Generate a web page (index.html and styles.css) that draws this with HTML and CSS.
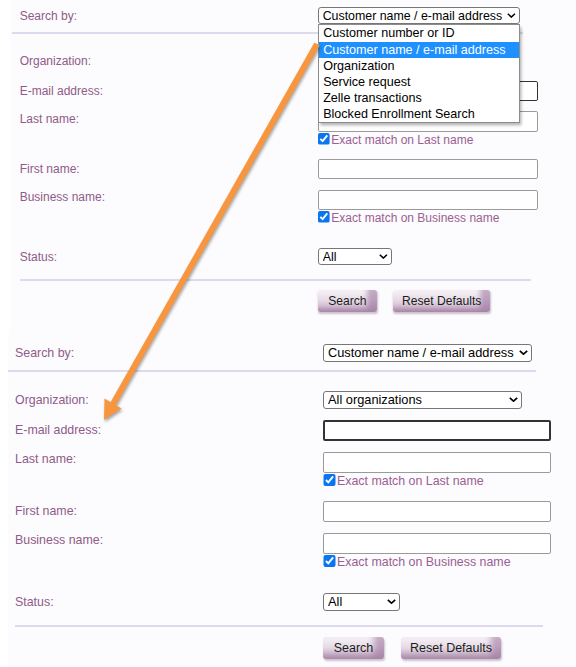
FILE: index.html
```html
<!DOCTYPE html>
<html lang="en">

<head>
  <meta charset="UTF-8" />
  <meta name="viewport" content="width=device-width, initial-scale=1.0" />
  <title>Customer search</title>
  <link rel="stylesheet" href="styles.css">
</head>

<body>
  <div class="page">

    <!-- first capture: the "Search by" list is open -->
    <form class="panel panel-top">
      <div class="row row-search">
        <label class="label">Search by:</label>
        <div class="select-wrap w-search">
          <select class="select">
            <option>Customer name / e-mail address</option>
          </select>
          <svg class="chevron" viewBox="0 0 9 5"><polyline points="0.8,0.8 4.5,4.2 8.2,0.8" /></svg>
          <ul class="options">
            <li class="option">Customer number or ID</li>
            <li class="option option-active">Customer name / e-mail address</li>
            <li class="option">Organization</li>
            <li class="option">Service request</li>
            <li class="option">Zelle transactions</li>
            <li class="option">Blocked Enrollment Search</li>
          </ul>
        </div>
      </div>

      <div class="rule rule-head"></div>

      <div class="row row-org">
        <label class="label">Organization:</label>
        <div class="select-wrap w-org">
          <select class="select">
            <option>All organizations</option>
          </select>
          <svg class="chevron" viewBox="0 0 9 5"><polyline points="0.8,0.8 4.5,4.2 8.2,0.8" /></svg>
        </div>
      </div>

      <div class="row">
        <label class="label">E-mail address:</label>
        <input class="input input-active" type="text">
      </div>

      <div class="row row-field">
        <label class="label">Last name:</label>
        <div class="field">
          <input class="input" type="text">
          <label class="check"><input type="checkbox" checked>Exact match on Last name</label>
        </div>
      </div>

      <div class="row row-first">
        <label class="label">First name:</label>
        <input class="input" type="text">
      </div>

      <div class="row row-field">
        <label class="label">Business name:</label>
        <div class="field">
          <input class="input" type="text">
          <label class="check"><input type="checkbox" checked>Exact match on Business name</label>
        </div>
      </div>

      <div class="row row-status">
        <label class="label">Status:</label>
        <div class="select-wrap w-status">
          <select class="select">
            <option>All</option>
          </select>
          <svg class="chevron" viewBox="0 0 9 5"><polyline points="0.8,0.8 4.5,4.2 8.2,0.8" /></svg>
        </div>
      </div>

      <div class="rule rule-end"></div>

      <div class="actions">
        <button type="button" class="btn btn-search">Search</button>
        <button type="button" class="btn btn-reset">Reset Defaults</button>
      </div>
    </form>

    <!-- second capture: after picking "Customer name / e-mail address" -->
    <form class="panel panel-bottom">
      <div class="row row-search">
        <label class="label">Search by:</label>
        <div class="select-wrap w-search">
          <select class="select">
            <option>Customer name / e-mail address</option>
          </select>
          <svg class="chevron" viewBox="0 0 9 5"><polyline points="0.8,0.8 4.5,4.2 8.2,0.8" /></svg>
        </div>
      </div>

      <div class="rule rule-head"></div>

      <div class="row row-org">
        <label class="label">Organization:</label>
        <div class="select-wrap w-org">
          <select class="select">
            <option>All organizations</option>
          </select>
          <svg class="chevron" viewBox="0 0 9 5"><polyline points="0.8,0.8 4.5,4.2 8.2,0.8" /></svg>
        </div>
      </div>

      <div class="row">
        <label class="label">E-mail address:</label>
        <input class="input input-active" type="text">
      </div>

      <div class="row row-field">
        <label class="label">Last name:</label>
        <div class="field">
          <input class="input" type="text">
          <label class="check"><input type="checkbox" checked>Exact match on Last name</label>
        </div>
      </div>

      <div class="row row-first">
        <label class="label">First name:</label>
        <input class="input" type="text">
      </div>

      <div class="row row-field">
        <label class="label">Business name:</label>
        <div class="field">
          <input class="input" type="text">
          <label class="check"><input type="checkbox" checked>Exact match on Business name</label>
        </div>
      </div>

      <div class="row row-status">
        <label class="label">Status:</label>
        <div class="select-wrap w-status">
          <select class="select">
            <option>All</option>
          </select>
          <svg class="chevron" viewBox="0 0 9 5"><polyline points="0.8,0.8 4.5,4.2 8.2,0.8" /></svg>
        </div>
      </div>

      <div class="rule rule-end"></div>

      <div class="actions">
        <button type="button" class="btn btn-search">Search</button>
        <button type="button" class="btn btn-reset">Reset Defaults</button>
      </div>
    </form>

    <!-- annotation arrow drawn over both captures -->
    <svg class="arrow" viewBox="0 0 576 667">
      <line x1="317" y1="44" x2="113" y2="404" />
      <polygon points="104,420 104.5,398.5 121.5,408.5" />
    </svg>

  </div>
</body>

</html>
```

FILE: styles.css
```css
/* base */
body {
  margin: 0;
  background-color: #ffffff;
  font-family: "Liberation Sans", Arial, Helvetica, sans-serif;
}

.page {
  position: relative;
  width: 576px;
  height: 667px;
  overflow: hidden;
}

/* the two captured forms */
.panel {
  box-sizing: border-box;
  background-color: #fcfbfe;
  padding-top: 9px;
}

.panel-top {
  /* the first capture was taken a little smaller */
  zoom: 0.968;
  height: 346px;
  margin-left: 10.3px;
  padding-top: 7.2px;
}

.panel-bottom {
  height: 332px;
  margin-left: 8px;
}

/* label + control rows */
.row {
  display: grid;
  grid-template-columns: 308px auto;
  align-items: center;
  justify-items: start;
  padding-left: 7px;
  margin-top: 11px;
}

.panel-top .row {
  padding-left: 10px;
}

.row-search {
  margin-top: 0;
}

.row-org {
  margin-top: 19px;
}

.row-first {
  margin-top: 12px;
}

.row-status {
  margin-top: 23px;
}

.row-field {
  align-items: start;
}

.label {
  font-size: 12.4px;
  line-height: 15px;
  color: #8f5b87;
  padding-top: 0.5px;
}

/* selects */
.select-wrap {
  position: relative;
  height: 18px;
}

.w-search {
  width: 209px;
}

.w-org {
  width: 199px;
}

.w-status {
  width: 77px;
}

.select {
  appearance: none;
  box-sizing: border-box;
  display: block;
  width: 100%;
  height: 18px;
  margin: 0;
  padding: 0 16px 0 4px;
  border: 1px solid #767676;
  border-radius: 3px;
  background-color: #ffffff;
  font-family: "Liberation Sans", Arial, sans-serif;
  font-size: 12.8px;
  color: #000000;
}

.chevron {
  position: absolute;
  right: 4.5px;
  top: 6.5px;
  width: 9px;
  height: 5px;
  fill: none;
  stroke: #000000;
  stroke-width: 1.6;
  pointer-events: none;
}

/* open list of the first capture */
.options {
  position: absolute;
  left: 0;
  top: 100%;
  z-index: 2;
  box-sizing: border-box;
  width: 100%;
  margin: 0;
  padding: 0;
  list-style: none;
  background-color: #ffffff;
  border: 1px solid #8c8c8c;
  box-shadow: 2px 3px 3px rgba(0, 0, 0, 0.3);
}

.option {
  padding: 0 4.5px;
  font-size: 13px;
  line-height: 16.67px;
  color: #000000;
  white-space: nowrap;
}

.option-active {
  background-color: #1e90ff;
  color: #ffffff;
}

/* text fields */
.input {
  box-sizing: border-box;
  display: block;
  width: 228px;
  height: 21px;
  margin: 0;
  border: 1px solid #9a9a9a;
  border-radius: 2px;
  background-color: #ffffff;
}

.input-active {
  border: 2px solid #333333;
}

.check {
  display: flex;
  align-items: flex-start;
  gap: 1.5px;
  margin-top: 1px;
  font-size: 12.4px;
  line-height: 15px;
  color: #9a6190;
  white-space: nowrap;
}

.check input {
  width: 12.5px;
  height: 12.5px;
  margin: 0;
  accent-color: #0a75f0;
}

/* separators */
.rule {
  width: 528px;
  height: 2px;
  background-color: #dddaf0;
}

.rule-head {
  margin-top: 8px;
}

.panel-top .rule-head {
  margin-left: 2px;
}

.rule-end {
  margin-top: 14px;
  margin-left: 7px;
}

.panel-top .rule-end {
  margin-left: 10px;
}

/* buttons */
.actions {
  display: flex;
  gap: 17px;
  margin-top: 10px;
  padding-left: 315px;
}

.panel-top .actions {
  padding-left: 318px;
}

.btn {
  height: 22px;
  padding: 0;
  border: none;
  border-radius: 3px;
  font-family: "Liberation Sans", Arial, sans-serif;
  font-size: 12.5px;
  color: #1c1c1c;
  background: linear-gradient(180deg, #f7f3f7 0%, #e6dbe6 45%, #c7b0c6 100%);
  box-shadow:
    inset -10px -4px 6px rgba(120, 65, 120, 0.4),
    1px 2px 2px rgba(90, 60, 90, 0.3);
}

.btn-search {
  width: 61px;
}

.btn-reset {
  width: 100px;
}

/* annotation */
.arrow {
  position: absolute;
  left: 0;
  top: 0;
  z-index: 3;
  width: 576px;
  height: 667px;
  pointer-events: none;
  filter: drop-shadow(1.5px 2px 1.5px rgba(0, 0, 0, 0.35));
}

.arrow line {
  stroke: #f7963f;
  stroke-width: 6;
}

.arrow polygon {
  fill: #f7963f;
}
```
